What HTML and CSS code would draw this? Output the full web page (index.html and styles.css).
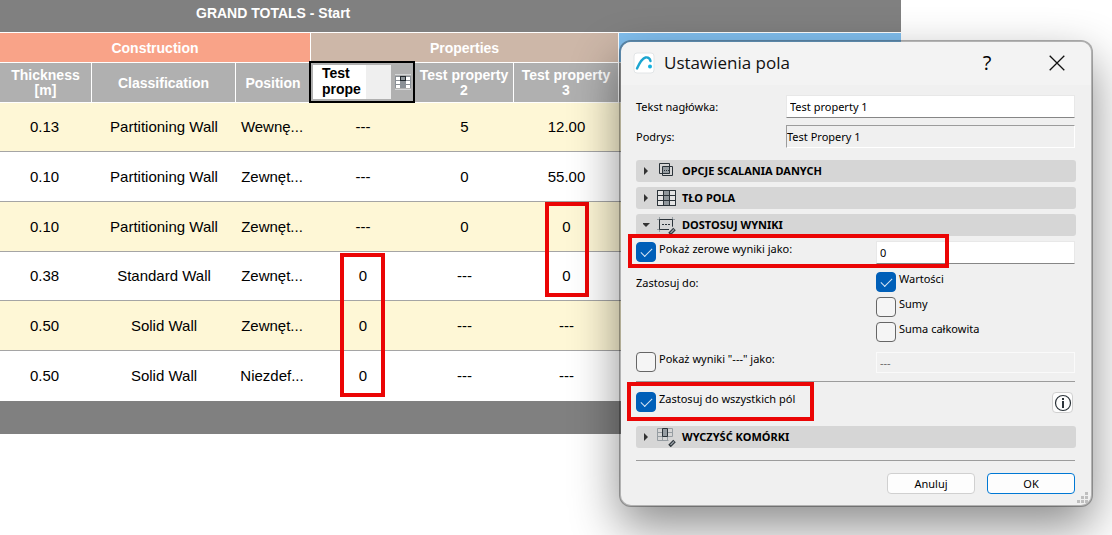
FILE: index.html
```html
<!DOCTYPE html>
<html lang="pl">
<head>
<meta charset="utf-8">
<title>Ustawienia pola</title>
<link rel="stylesheet" href="styles.css">
</head>
<body>
<main class="workspace">
  <table class="schedule">
    <colgroup>
      <col class="col-thickness"><col class="col-class"><col class="col-position"><col class="col-p1"><col class="col-p2"><col class="col-p3"><col>
    </colgroup>
    <thead>
      <tr class="totals"><th colspan="7">GRAND TOTALS - Start</th></tr>
      <tr class="groups">
        <th class="construction" colspan="3">Construction</th>
        <th class="properties" colspan="3">Properties</th>
        <th class="other"></th>
      </tr>
      <tr class="names">
        <th>Thickness<br>[m]</th>
        <th>Classification</th>
        <th>Position</th>
        <th class="editing">
          <div class="editor">
            <textarea class="editor-text" aria-label="Test property 1">Test prope</textarea>
            <button class="editor-button" type="button" aria-label="Ustawienia pola">
              <svg width="16" height="16" viewBox="0 0 16 16" shape-rendering="crispEdges">
                <path fill="#d5d7d8" d="M0 0h16v1H0zM0 15h16v1H0z"/>
                <path fill="#8a9096" d="M0 2h16v12H0z"/>
                <path fill="#fff" d="M1 3h4v3H1zM11 3h4v3h-4zM1 7h4v3H1zM11 7h4v3h-4zM1 11h4v3H1zM11 11h4v3h-4z"/>
                <path fill="#22292e" d="M5 2h6v5H5z"/>
                <path fill="#8f969b" d="M6 3h4v3H6z"/>
              </svg>
            </button>
          </div>
        </th>
        <th>Test property<br>2</th>
        <th>Test property<br>3</th>
        <th></th>
      </tr>
    </thead>
    <tbody>
      <tr><td>0.13</td><td>Partitioning Wall</td><td>Wewnę...</td><td>---</td><td>5</td><td>12.00</td><td></td></tr>
      <tr><td>0.10</td><td>Partitioning Wall</td><td>Zewnęt...</td><td>---</td><td>0</td><td>55.00</td><td></td></tr>
      <tr><td>0.10</td><td>Partitioning Wall</td><td>Zewnęt...</td><td>---</td><td>0</td><td>0</td><td></td></tr>
      <tr><td>0.38</td><td>Standard Wall</td><td>Zewnęt...</td><td>0</td><td>---</td><td>0</td><td></td></tr>
      <tr><td>0.50</td><td>Solid Wall</td><td>Zewnęt...</td><td>0</td><td>---</td><td>---</td><td></td></tr>
      <tr><td>0.50</td><td>Solid Wall</td><td>Niezdef...</td><td>0</td><td>---</td><td>---</td><td></td></tr>
    </tbody>
    <tfoot>
      <tr><td colspan="7"></td></tr>
    </tfoot>
  </table>
  <div class="mark mark-p1"></div>
  <div class="mark mark-p3"></div>

  <form class="dialog" role="dialog" aria-labelledby="dialog-title">
    <header class="titlebar">
      <svg class="logo" width="22" height="22" viewBox="0 0 22 22">
        <rect x="1" y="1" width="20" height="20" rx="3" fill="#fff" stroke="#e2e5e7"/>
        <path d="M4 16.500C6 12 8.500 6.500 12.500 5.500c3-.5 4.500 1.200 5 3.500" fill="none" stroke="#1ba5d0" stroke-width="2.400" stroke-linecap="round"/>
        <circle cx="17" cy="14.500" r="2" fill="#12b1e0"/>
      </svg>
      <h1 class="title" id="dialog-title">Ustawienia pola</h1>
      <button class="window-button help" type="button" aria-label="Pomoc">?</button>
      <button class="window-button" type="button" aria-label="Zamknij">
        <svg width="16" height="16" viewBox="0 0 16 16"><path d="M.7.700l14.600 14.600M15.300.700L.7 15.300" stroke="#111" stroke-width="1.300"/></svg>
      </button>
    </header>
    <div class="content">
      <div class="field">
        <label for="header-text">Tekst nagłówka:</label>
        <input class="text" id="header-text" type="text" value="Test property 1">
      </div>
      <div class="field">
        <label for="hint">Podrys:</label>
        <input class="text readonly" id="hint" type="text" value="Test Propery 1" readonly>
      </div>

      <div class="sections">
        <button class="section" type="button" aria-expanded="false">
          <span class="arrow"></span>
          <svg class="icon" width="20" height="20" viewBox="0 0 20 20" fill="none" stroke="#2b3339">
            <path fill="#969da2" stroke="none" d="M5 6h8v7H5z"/>
            <path d="M2.500 2.500h10v10h-10zM5.500 5.500h10v9h-10z"/>
            <path d="M7 9.500h5" stroke-dasharray="1 1"/>
          </svg>OPCJE SCALANIA DANYCH
        </button>
        <button class="section" type="button" aria-expanded="false">
          <span class="arrow"></span>
          <svg class="icon" width="20" height="20" viewBox="0 0 20 20" fill="none" stroke="#2b3339">
            <path d="M.5 2.500h18v15H.5z" fill="#e4e4e4"/>
            <path d="M7 3h5v14H7z" fill="#8f969b" stroke="none"/>
            <path d="M.5 2.500h18v15H.5zM.5 7.500h18M.5 12.500h18M6.500 2.500v15M12.500 2.500v15"/>
          </svg>TŁO POLA
        </button>
        <button class="section" type="button" aria-expanded="true">
          <span class="arrow open"></span>
          <svg class="icon" width="20" height="20" viewBox="0 0 20 20" fill="none" stroke="#2b3339">
            <path stroke="#969da2" d="M0 4.500h18M2.500 2v15M15.500 2v10M0 14.500h12"/>
            <path d="M15.500 11.500v-7h-13v10h9.500"/>
            <path d="M5 9.500h8" stroke-dasharray="2 1"/>
            <path d="M12.500 19l5-5" stroke-width="3.500"/><path d="M13.500 18l3.500-3.500" stroke="#969da2" stroke-width="1.500"/>
          </svg>DOSTOSUJ WYNIKI
        </button>
      </div>

      <div class="options">
        <label class="check" for="show-zero"><input id="show-zero" type="checkbox" checked>Pokaż zerowe wyniki jako:</label>
        <input class="text" type="text" value="0" aria-label="Pokaż zerowe wyniki jako">
        <span class="caption" id="apply-to">Zastosuj do:</span>
        <div class="checks" role="group" aria-labelledby="apply-to">
          <label class="check"><input type="checkbox" checked>Wartości</label>
          <label class="check"><input type="checkbox">Sumy</label>
          <label class="check"><input type="checkbox">Suma całkowita</label>
        </div>
        <label class="check" for="show-dash"><input id="show-dash" type="checkbox">Pokaż wyniki "---" jako:</label>
        <input class="text disabled" type="text" value="---" aria-label="Pokaż wyniki --- jako" disabled>
      </div>

      <hr class="rule">
      <div class="apply-all">
        <label class="check"><input type="checkbox" checked>Zastosuj do wszystkich pól</label>
        <button class="info" type="button" aria-label="Informacje">
          <svg width="18" height="18" viewBox="0 0 18 18"><circle cx="9" cy="9" r="7.500" fill="none" stroke="#2b3339" stroke-width="1.200"/><path fill="#2b3339" d="M8 4h2v2H8zM8 7h2v7H8z"/></svg>
        </button>
      </div>
      <button class="section" type="button" aria-expanded="false">
        <span class="arrow"></span>
        <svg class="icon" width="20" height="20" viewBox="0 0 20 20" fill="none" stroke="#969da2">
          <path d="M.5 1.500h15v8M.5 1.500v12h11M.5 5.500h15M.5 9.500h15M5.500 1v13M10.500 1v13"/>
          <path d="M5.500 1.500h5v8h-5z" fill="#969da2" stroke="#2b3339"/>
          <path d="M12.500 19l5-5" stroke="#2b3339" stroke-width="3.500"/><path d="M13.500 18l3.500-3.500" stroke-width="1.500"/>
        </svg>WYCZYŚĆ KOMÓRKI
      </button>
      <hr class="rule rule-bottom">
      <footer class="actions">
        <button class="action" type="button">Anuluj</button>
        <button class="action primary" type="submit">OK</button>
      </footer>
    </div>
    <svg class="grip" width="11" height="11" viewBox="0 0 11 11"><path fill="#bfbfbf" d="M8 0h3v3H8zM4 4h3v3H4zM8 4h3v3H8zM0 8h3v3H0zM4 8h3v3H4zM8 8h3v3H8z"/></svg>
    <div class="mark mark-zero"></div>
    <div class="mark mark-all"></div>
  </form>
</main>
</body>
</html>
```

FILE: styles.css
```css
* { box-sizing: border-box; }

body {
  margin: 0;
  background: #fff;
  overflow: hidden;
}

.workspace {
  position: relative;
  min-height: 100vh;
}

button, input, textarea { font: inherit; color: inherit; }

/* Schedule table */
.schedule {
  width: 81%;
  table-layout: fixed;
  border-collapse: separate;
  border-spacing: 0;
  font: 15px/16px "Liberation Sans", Arial, sans-serif;
  color: #000;
  text-align: center;
}
.schedule th, .schedule td { padding: 0; }
.schedule th {
  font-size: 14px;
  line-height: 15px;
  color: #fff;
  border-right: 1px solid #fff;
  border-bottom: 1px solid #fff;
}
.schedule th:last-child { border-right: 0; }
.col-thickness { width: 92px; }
.col-class { width: 144px; }
.col-position { width: 75px; }
.col-p1 { width: 104px; }
.col-p2 { width: 99px; }
.col-p3 { width: 105px; }

.schedule .totals th {
  height: 33px;
  padding: 0 0 6px 196px;
  text-align: left;
  background: #808080;
}
.schedule .groups th { height: 30px; padding-top: 1px; }
.construction { background: #f9a388; }
.properties { background: #cdb7a8; }
.other { background: #82c0f0; }
.schedule .names th { height: 40px; padding-top: 1px; background: #b0b0b0; }

.schedule tbody td {
  height: 50px;
  border-bottom: 1px solid #a5a5a5;
}
.schedule tbody tr:nth-child(3n+1) td { height: 49px; }
.schedule tbody tr:nth-child(odd) td { background: #fef7d6; }
.schedule tbody tr:last-child td { border-bottom: 0; }
.schedule td:nth-child(1) { padding-right: 3px; }
.schedule td:nth-child(3) { padding-right: 3px; }
.schedule tfoot td { height: 33px; background: #808080; }

.editing { position: relative; }
.editor {
  position: absolute;
  inset: -2px -1px -1px -2px;
  display: flex;
  align-items: center;
  padding: 2px;
  border: 2px solid #000;
  background: #b0b0b0;
}
.editor-text {
  flex: 1;
  min-width: 0;
  height: 100%;
  padding: 0 0 0 9px;
  border: 0;
  border-right: 25px solid #efefef;
  resize: none;
  overflow: hidden;
  outline: 0;
  background: #fff;
  color: #000;
  font-weight: bold;
  line-height: 16px;
}
.editor-button {
  display: flex;
  margin-left: 4px;
  padding: 0;
  border: 0;
  background: none;
}

/* Highlight frames */
.mark {
  position: absolute;
  border: 4px solid #eb0505;
  pointer-events: none;
}
.mark-p1 { left: 340px; top: 253px; width: 45px; height: 144px; }
.mark-p3 { left: 545px; top: 202px; width: 44px; height: 95px; }
.mark-zero { left: 7px; top: 192px; width: 321px; height: 34px; }
.mark-all { left: 6px; top: 340px; width: 187px; height: 39px; }

/* Settings dialog */
.dialog {
  position: absolute;
  top: 40px;
  right: 19px;
  width: 474px;
  border: 2px solid rgba(0, 0, 0, 0.3);
  border-radius: 12px;
  background: #f0f0f0 padding-box;
  box-shadow: 0 20px 48px rgba(0, 0, 0, 0.45);
  font: 11px/16px "Noto Sans", "Open Sans", sans-serif;
  color: #000;
}
.titlebar {
  display: flex;
  align-items: center;
  height: 43px;
  padding: 0 18px 2px 12px;
  border-radius: 10px 10px 0 0;
  background: #f3f3f3;
}
.title {
  flex: 1;
  margin: 0 0 0 9px;
  font-family: "Open Sans", "Noto Sans", sans-serif;
  font-size: 17px;
  line-height: 24px;
  font-weight: 400;
  color: #111;
}
.window-button {
  display: flex;
  justify-content: center;
  align-items: center;
  width: 32px;
  height: 32px;
  padding: 0;
  border: 0;
  background: none;
}
.help { margin-right: 38px; font-family: "Open Sans", "Noto Sans", sans-serif; font-size: 20px; }

.content { padding: 10px 15px 11px; }

.field {
  display: grid;
  grid-template-columns: 150px 1fr;
  align-items: center;
  margin: 0 1px 7px 0;
}
.text {
  width: 100%;
  min-width: 0;
  height: 23px;
  padding: 0 3px;
  border: 1px solid #e8e8e8;
  border-bottom-color: #868686;
  border-radius: 0;
  outline: 0;
  background: #fff;
}
.readonly {
  padding: 0;
  border-color: #9c9c9c #fff #fff #9c9c9c;
  background: #f0f0f0;
}
.disabled {
  height: 21px;
  border-color: #fafafa;
  background: #f0f0f0;
  color: #6d6d6d;
}

.sections {
  display: grid;
  gap: 5px;
  padding-top: 5px;
}
.section {
  display: flex;
  align-items: center;
  width: 100%;
  height: 22px;
  padding: 0 7px;
  border: 0;
  border-radius: 3px;
  background: #d6d6d6;
  font-weight: 700;
  text-align: left;
}
.arrow {
  width: 14px;
  height: 8px;
  background: #333;
  clip-path: polygon(1px 0, 5px 4px, 1px 8px);
}
.arrow.open { clip-path: polygon(-1px 2px, 7px 2px, 3px 6px); }
.icon { margin-right: 5px; }

.options {
  display: grid;
  grid-template-columns: 240px 1fr;
  gap: 8px 0;
  padding: 5px 1px 8px 0;
}
.check {
  display: flex;
  align-items: flex-start;
  gap: 3px;
  height: 20px;
  line-height: 14px;
}
.options > .check { margin-top: 1px; }
.options > .check:nth-last-child(2) { margin: 0; }
.caption { padding-top: 3px; }
.check input {
  appearance: none;
  position: relative;
  flex: none;
  width: 20px;
  height: 20px;
  margin: 0;
  border: 1px solid #666;
  border-radius: 4px;
  background: #f5f5f5;
}
.check input:checked { border-color: #005fb8; background: #005fb8; }
.check input:checked::after {
  content: "";
  position: absolute;
  left: 4px;
  top: 5px;
  width: 10px;
  height: 5px;
  border: solid #d5e5f4;
  border-width: 0 0 1px 1px;
  transform: rotate(-45deg);
}
.checks { display: grid; gap: 5px; padding-bottom: 2px; }

.rule {
  height: 1px;
  margin: 0 1px 0 0;
  border: 0;
  background: #9c9c9c;
}
.apply-all {
  display: flex;
  justify-content: space-between;
  padding: 10px 3px 13px 0;
}
.info {
  display: flex;
  justify-content: center;
  align-items: center;
  width: 21px;
  height: 21px;
  padding: 0;
  border: 1px solid #d0d0d0;
  border-radius: 4px;
  background: #fdfdfd;
}
.rule-bottom { margin-top: 12px; }
.actions {
  display: flex;
  justify-content: flex-end;
  gap: 12px;
  padding: 12px 1px 0 0;
}
.action {
  width: 88px;
  height: 21px;
  padding: 0;
  border: 1px solid #d0d0d0;
  border-radius: 4px;
  background: #fdfdfd;
}
.primary { border-color: #0078d4; }
.grip { position: absolute; right: 3px; bottom: 2px; }
```
